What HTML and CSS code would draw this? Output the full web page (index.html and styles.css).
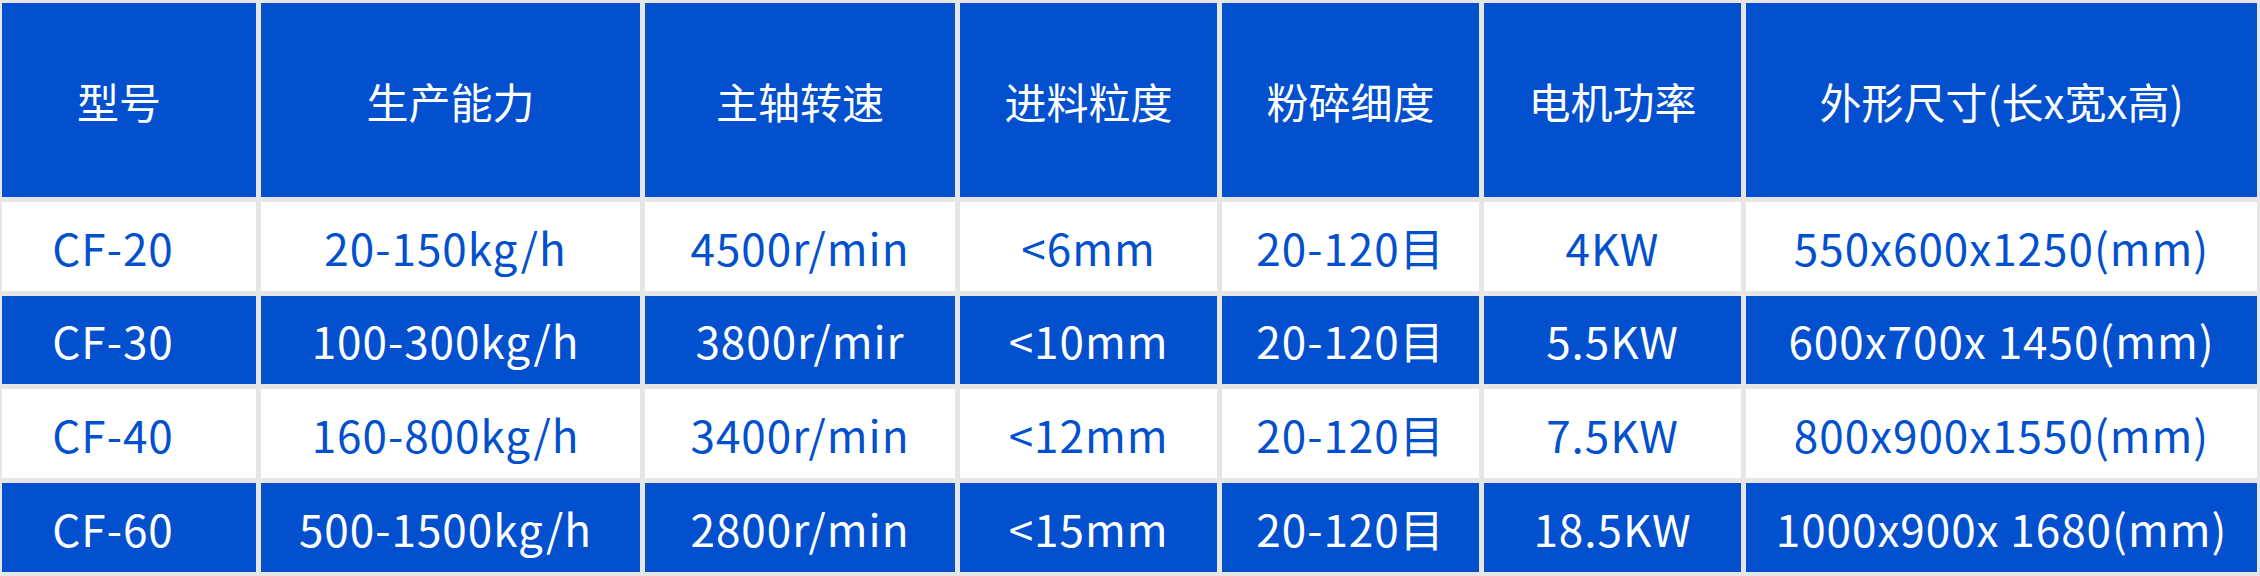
FILE: index.html
```html
<!DOCTYPE html>
<html lang="zh-CN">
<head>
<meta charset="utf-8">
<title>参数表</title>
<link rel="stylesheet" href="styles.css">
</head>
<body>
<div class="spec-table">
  <div class="cell head c1">型号</div>
  <div class="cell head">生产能力</div>
  <div class="cell head">主轴转速</div>
  <div class="cell head">进料粒度</div>
  <div class="cell head">粉碎细度</div>
  <div class="cell head">电机功率</div>
  <div class="cell head">外形尺寸(长x宽x高)</div>

  <div class="cell light c1">CF-20</div>
  <div class="cell light c2">20-150kg/h</div>
  <div class="cell light">4500r/min</div>
  <div class="cell light">&lt;6mm</div>
  <div class="cell light">20-120目</div>
  <div class="cell light">4KW</div>
  <div class="cell light">550x600x1250(mm)</div>

  <div class="cell dark c1">CF-30</div>
  <div class="cell dark c2">100-300kg/h</div>
  <div class="cell dark">3800r/mir</div>
  <div class="cell dark">&lt;10mm</div>
  <div class="cell dark">20-120目</div>
  <div class="cell dark">5.5KW</div>
  <div class="cell dark">600x700x 1450(mm)</div>

  <div class="cell light c1">CF-40</div>
  <div class="cell light c2">160-800kg/h</div>
  <div class="cell light">3400r/min</div>
  <div class="cell light">&lt;12mm</div>
  <div class="cell light">20-120目</div>
  <div class="cell light">7.5KW</div>
  <div class="cell light">800x900x1550(mm)</div>

  <div class="cell dark c1">CF-60</div>
  <div class="cell dark c2">500-1500kg/h</div>
  <div class="cell dark">2800r/min</div>
  <div class="cell dark">&lt;15mm</div>
  <div class="cell dark">20-120目</div>
  <div class="cell dark">18.5KW</div>
  <div class="cell dark">1000x900x 1680(mm)</div>
</div>
</body>
</html>
```
FILE: styles.css
```css
html, body {
  margin: 0;
  padding: 0;
  background: #e6e6e6;
}

.spec-table {
  width: 2260px;
  height: 576px;
  box-sizing: border-box;
  display: grid;
  grid-template-columns: 254px 379px 310px 257px 257px 257px 1fr;
  grid-template-rows: 194px 89px 88px 89px 89px;
  column-gap: 5px;
  row-gap: 5px;
  padding: 3px 3px 4px 2px;
  background: #e6e6e6;
  font-family: "Noto Sans CJK SC", "Noto Sans", sans-serif;
}

.cell {
  display: flex;
  align-items: center;
  justify-content: center;
  white-space: nowrap;
  font-size: 44px;
  letter-spacing: 1px;
}

.head {
  background: #0250ce;
  color: #ffffff;
  font-size: 42px;
  font-weight: 400;
  letter-spacing: 0;
}

.head.c1 {
  padding-right: 20px;
}

.c1 {
  padding-right: 32px;
}

.c2 {
  padding-right: 10px;
}

.light {
  background: #ffffff;
  color: #0250ce;
}

.dark {
  background: #0250ce;
  color: #ffffff;
}
```
